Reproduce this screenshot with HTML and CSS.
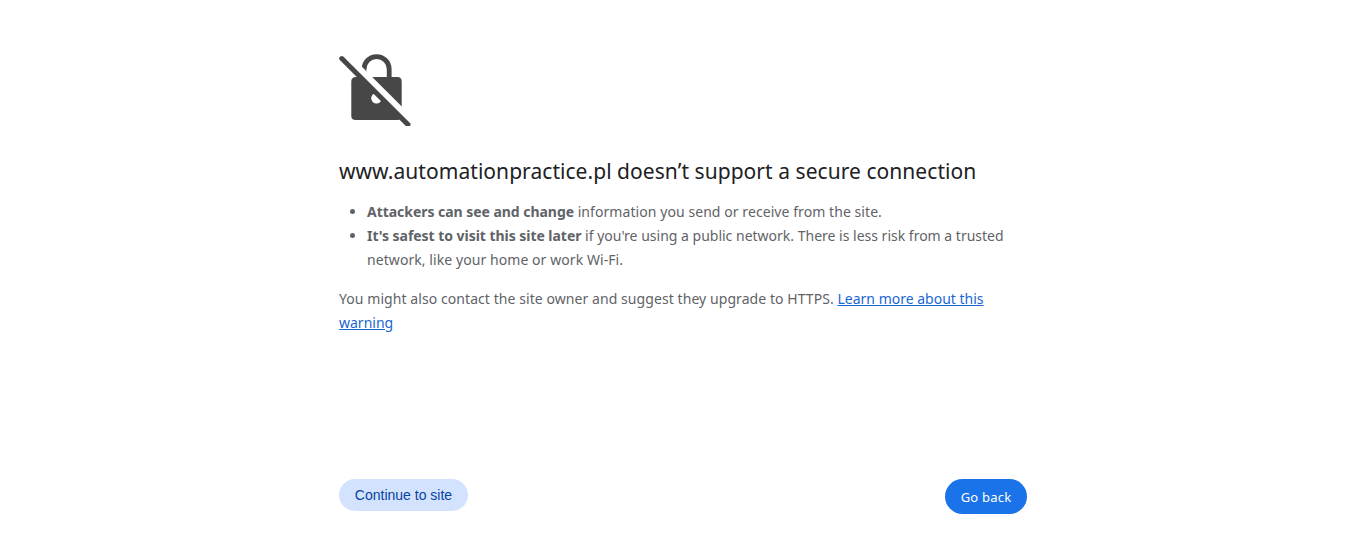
FILE: index.html
```
<!DOCTYPE html>
<html lang="en">
<head>
<meta charset="utf-8">
<title>Privacy error</title>
<link rel="stylesheet" href="styles.css">
</head>
<body>
<main class="interstitial">
  <svg class="icon" viewBox="0 0 72 72" aria-hidden="true">
    <path class="ink" d="M17 23H58.500Q62.700 23 62.700 27.500V62Q62.700 66 58.500 66H16.500Q12.300 66 12.300 62V27.500Q12.300 23 17 23Z"/>
    <path class="shackle" d="M25 23V15.200A12.600 12.600 0 0 1 50.200 15.200V23"/>
    <circle class="gap" cx="37.500" cy="44.300" r="5.300"/>
    <path class="gap" d="M20 19V10L22.700 12.500L33.200 23L64 53.800V63Z"/>
    <path class="ink" d="M.8 6.100Q-.7 4.300 1 2.800Q3 1.300 4.500 2.800L71.500 69.600Q71.800 72 70.500 72H66.800Z"/>
  </svg>
  <h1 class="title">www.automationpractice.pl doesn’t support a secure connection</h1>
  <ul class="advice">
    <li><b class="lead">Attackers can see and change</b> <span class="loose">information you send or receive from the site.</span></li>
    <li><b class="lead">It's safest to visit this site later</b> if you're using a public network. There is less risk from a trusted<br><span class="loose">network, like your home or work Wi-Fi.</span></li>
  </ul>
  <p class="contact"><span class="loose">You might also contact the site owner and suggest they upgrade to HTTPS.</span> <a class="link" href="#">Learn more about this<br>warning</a></p>
  <div class="actions">
    <button class="button button-continue">Continue to site</button>
    <button class="button button-back">Go back</button>
  </div>
</main>
</body>
</html>
```
FILE: styles.css
```
body {
  margin: 0;
  background: #fff;
  color: #5f6368;
  font: 14px/24px "Segoe UI", "Noto Sans", sans-serif;
}
.interstitial {
  box-sizing: border-box;
  width: 688px;
  margin-left: 339px;
  padding-top: 54px;
  white-space: nowrap;
}
.icon { display: block; width: 72px; height: 72px; }
.ink { fill: #474747; }
.shackle { fill: none; stroke: #474747; stroke-width: 4.8; }
.gap { fill: #fff; }
.title {
  margin: 31px 0 14px;
  color: #202124;
  font-size: 21px;
  font-weight: 400;
  line-height: 29px;
  letter-spacing: 0.05px;
}
.advice { margin: 0; padding-left: 28px; }
.lead { letter-spacing: -0.04px; }
.loose { letter-spacing: 0.07px; }
.contact { margin: 15px 0 0; }
.link { color: #1967d2; text-decoration: underline; }
.actions {
  display: flex;
  justify-content: space-between;
  align-items: flex-start;
  margin-top: 144px;
}
.button { border: 0; border-radius: 20px; padding: 0; }
.button-continue {
  width: 129px;
  height: 32px;
  background: #d3e3fd;
  color: #0842a0;
  font: 14px "Liberation Sans", Arial, sans-serif;
}
.button-back {
  width: 82px;
  height: 35px;
  background: #1a73e8;
  color: #fff;
  font: 13px "Segoe UI", "Noto Sans", sans-serif;
  letter-spacing: 0.2px;
}
```
